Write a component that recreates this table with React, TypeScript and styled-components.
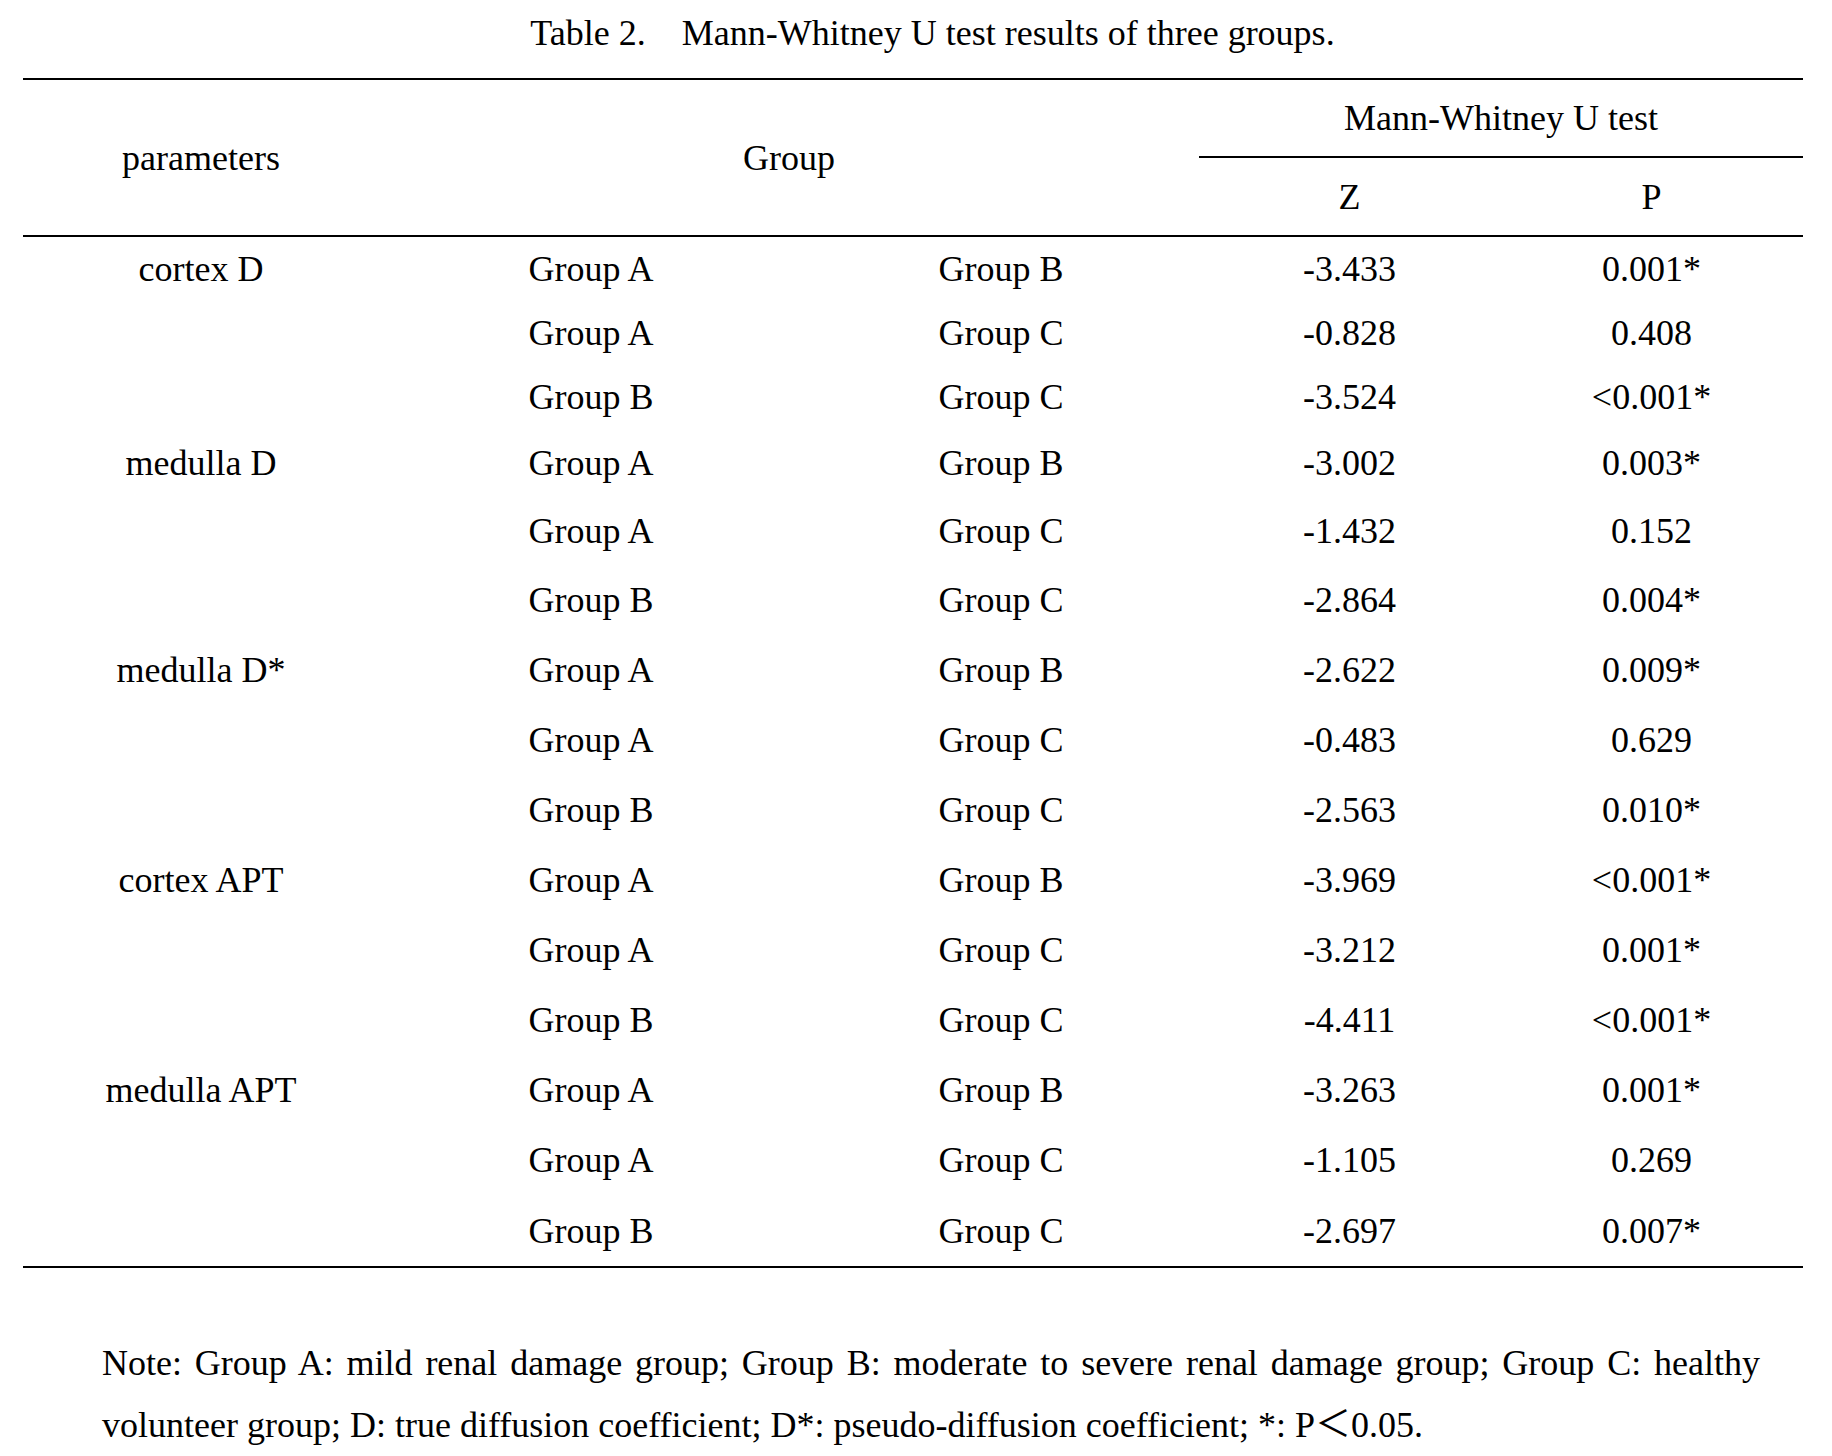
import React from 'react';
import styled, { createGlobalStyle } from 'styled-components';

const COLS = '356px 424px 396px 301px 303px';

type ResultRow = {
  param?: string;
  first: string;
  second: string;
  z: string;
  p: string;
  h: number;
};

const Rows: ResultRow[] = [
  { param: 'cortex D', first: 'Group A', second: 'Group B', z: '-3.433', p: '0.001*', h: 64 },
  { first: 'Group A', second: 'Group C', z: '-0.828', p: '0.408', h: 63 },
  { first: 'Group B', second: 'Group C', z: '-3.524', p: '<0.001*', h: 66 },
  { param: 'medulla D', first: 'Group A', second: 'Group B', z: '-3.002', p: '0.003*', h: 66 },
  { first: 'Group A', second: 'Group C', z: '-1.432', p: '0.152', h: 70 },
  { first: 'Group B', second: 'Group C', z: '-2.864', p: '0.004*', h: 68 },
  { param: 'medulla D*', first: 'Group A', second: 'Group B', z: '-2.622', p: '0.009*', h: 71 },
  { first: 'Group A', second: 'Group C', z: '-0.483', p: '0.629', h: 70 },
  { first: 'Group B', second: 'Group C', z: '-2.563', p: '0.010*', h: 70 },
  { param: 'cortex APT', first: 'Group A', second: 'Group B', z: '-3.969', p: '<0.001*', h: 70 },
  { first: 'Group A', second: 'Group C', z: '-3.212', p: '0.001*', h: 70 },
  { first: 'Group B', second: 'Group C', z: '-4.411', p: '<0.001*', h: 70 },
  { param: 'medulla APT', first: 'Group A', second: 'Group B', z: '-3.263', p: '0.001*', h: 70 },
  { first: 'Group A', second: 'Group C', z: '-1.105', p: '0.269', h: 70 },
  { first: 'Group B', second: 'Group C', z: '-2.697', p: '0.007*', h: 71 },
];

const App = () => {
  return (
    <>
      <GlobalStyle />
      <Page>
        <Caption>
          <CaptionLabel>Table 2.</CaptionLabel>
          Mann-Whitney U test results of three groups.
        </Caption>

        <Table>
          <Head>
            <HeadCell $col='1' $row='1 / 4'>
              parameters
            </HeadCell>
            <HeadCell $col='2 / 4' $row='1 / 4'>
              Group
            </HeadCell>
            <HeadCell $col='4 / 6' $row='1'>
              Mann-Whitney U test
            </HeadCell>
            <SubRule />
            <HeadCell $col='4' $row='3'>
              Z
            </HeadCell>
            <HeadCell $col='5' $row='3'>
              P
            </HeadCell>
          </Head>

          {Rows.map((row, i) => (
            <BodyRow key={i} $h={row.h}>
              <Cell>{row.param}</Cell>
              <Cell>{row.first}</Cell>
              <Cell>{row.second}</Cell>
              <Cell>{row.z}</Cell>
              <Cell>{row.p}</Cell>
            </BodyRow>
          ))}
        </Table>

        <Note>
          Note: Group A: mild renal damage group; Group B: moderate to severe
          renal damage group; Group C: healthy volunteer group; D: true
          diffusion coefficient; D*: pseudo-diffusion coefficient; *: P＜0.05.
        </Note>
      </Page>
    </>
  );
};

export default App;

const GlobalStyle = createGlobalStyle`
  html, body {
    margin: 0;
    padding: 0;
    background: #ffffff;
  }

  body {
    color: #000000;
    font-family: "Liberation Serif", "Times New Roman", "Noto Sans CJK SC", serif;
    font-size: 36px;
  }
`;

const Page = styled.div`
  width: 1832px;
  padding-top: 13px;
`;

const Caption = styled.div`
  padding-left: 33px;
  margin-bottom: 24px;
  line-height: 41px;
  text-align: center;
  white-space: nowrap;
`;

const CaptionLabel = styled.span`
  margin-right: 36px;
`;

const Table = styled.div`
  width: 1780px;
  margin-left: 23px;
  border-top: 2px solid #000000;
  border-bottom: 2px solid #000000;
`;

const Head = styled.div`
  display: grid;
  grid-template-columns: ${COLS};
  grid-template-rows: 76px 2px 77px;
  border-bottom: 2px solid #000000;
`;

const HeadCell = styled.div<{ $col: string; $row: string }>`
  grid-column: ${(p) => p.$col};
  grid-row: ${(p) => p.$row};
  display: flex;
  justify-content: center;
  align-items: center;
  white-space: nowrap;
`;

const SubRule = styled.div`
  grid-column: 4 / 6;
  grid-row: 2;
  background: #000000;
`;

const BodyRow = styled.div<{ $h: number }>`
  display: grid;
  grid-template-columns: ${COLS};
  height: ${(p) => p.$h}px;
`;

const Cell = styled.div`
  display: flex;
  justify-content: center;
  align-items: center;
  white-space: nowrap;
`;

const Note = styled.p`
  width: 1658px;
  margin: 64px 0 0 102px;
  line-height: 62px;
  text-align: justify;
`;
